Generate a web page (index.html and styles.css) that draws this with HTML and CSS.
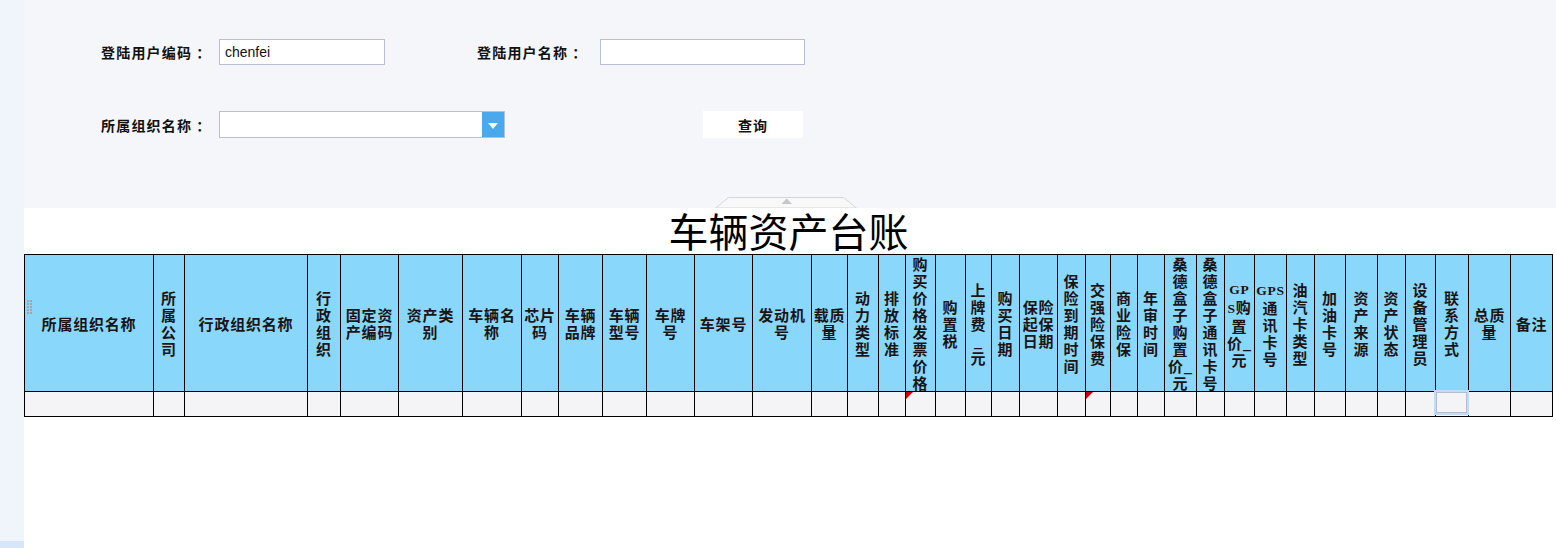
FILE: index.html
```html
<!DOCTYPE html>
<html lang="zh-CN">
<head>
<meta charset="utf-8">
<title>车辆资产台账</title>
<link rel="stylesheet" href="styles.css">
</head>
<body>
<div class="page">
  <aside class="side">
    <div class="side-fill"></div>
    <div class="side-foot"></div>
  </aside>
  <main class="main">
    <section class="query">
      <div class="qrow qrow-1">
        <label class="lbl">登陆用户编码<span class="colon">：</span></label>
        <input class="inp inp-code" type="text" value="chenfei">
        <label class="lbl lbl-name">登陆用户名称<span class="colon">：</span></label>
        <input class="inp inp-name" type="text" value="">
      </div>
      <div class="qrow qrow-2">
        <label class="lbl">所属组织名称<span class="colon">：</span></label>
        <div class="combo">
          <div class="combo-text"></div>
          <div class="combo-btn">
            <svg width="10" height="6" viewBox="0 0 10 6"><polygon points="0,0 10,0 5,6" fill="#ffffff"/></svg>
          </div>
        </div>
        <button class="btn" type="button">查询</button>
      </div>
      <div class="collapse-tab">
        <svg width="142" height="11" viewBox="0 0 142 11">
          <polygon points="0.5,11 13.5,0.5 128.5,0.5 141.5,11" fill="#f8f8f9" stroke="#d6d6d8" stroke-width="1"/>
          <polygon points="66.5,7 71.7,1.5 77,7" fill="#c6c6c8"/>
        </svg>
      </div>
    </section>
    <section class="report">
      <h1 class="title">车辆资产台账</h1>
      <div class="sheet">
        <div class="th th-first">
          <svg class="drag" width="6" height="16" viewBox="0 0 6 16">
            <g fill="#9ba6b3">
              <rect x="0" y="0" width="2" height="2"/><rect x="3" y="0" width="2" height="2"/>
              <rect x="0" y="3" width="2" height="2"/><rect x="3" y="3" width="2" height="2"/>
              <rect x="0" y="6" width="2" height="2"/><rect x="3" y="6" width="2" height="2"/>
              <rect x="0" y="9" width="2" height="2"/><rect x="3" y="9" width="2" height="2"/>
              <rect x="0" y="12" width="2" height="2"/><rect x="3" y="12" width="2" height="2"/>
            </g>
          </svg>
          <span>所属组织名称</span>
        </div>
        <div class="th"><span>所属公司</span></div>
        <div class="th"><span>行政组织名称</span></div>
        <div class="th"><span>行政组织</span></div>
        <div class="th"><span>固定资产编码</span></div>
        <div class="th"><span>资产类别</span></div>
        <div class="th"><span>车辆名称</span></div>
        <div class="th"><span>芯片码</span></div>
        <div class="th"><span>车辆品牌</span></div>
        <div class="th"><span>车辆型号</span></div>
        <div class="th"><span>车牌号</span></div>
        <div class="th"><span>车架号</span></div>
        <div class="th"><span>发动机号</span></div>
        <div class="th"><span>载质量</span></div>
        <div class="th"><span>动力类型</span></div>
        <div class="th"><span>排放标准</span></div>
        <div class="th"><span>购买价格发票价格</span></div>
        <div class="th"><span>购置税</span></div>
        <div class="th"><span>上牌费_元</span></div>
        <div class="th"><span>购买日期</span></div>
        <div class="th"><span>保险起保日期</span></div>
        <div class="th"><span>保险到期时间</span></div>
        <div class="th"><span>交强险保费</span></div>
        <div class="th"><span>商业险保</span></div>
        <div class="th"><span>年审时间</span></div>
        <div class="th"><span>桑德盒子购置价_元</span></div>
        <div class="th"><span>桑德盒子通讯卡号</span></div>
        <div class="th"><span><span class="lat">GPS</span>购置价_元</span></div>
        <div class="th"><span><span class="lat">GPS</span>通讯卡号</span></div>
        <div class="th"><span>油汽卡类型</span></div>
        <div class="th"><span>加油卡号</span></div>
        <div class="th"><span>资产来源</span></div>
        <div class="th"><span>资产状态</span></div>
        <div class="th"><span>设备管理员</span></div>
        <div class="th"><span>联系方式</span></div>
        <div class="th"><span>总质量</span></div>
        <div class="th"><span>备注</span></div>

        <div class="td"></div>
        <div class="td"></div>
        <div class="td"></div>
        <div class="td"></div>
        <div class="td"></div>
        <div class="td"></div>
        <div class="td"></div>
        <div class="td"></div>
        <div class="td"></div>
        <div class="td"></div>
        <div class="td"></div>
        <div class="td"></div>
        <div class="td"></div>
        <div class="td"></div>
        <div class="td"></div>
        <div class="td"></div>
        <div class="td td-note"></div>
        <div class="td"></div>
        <div class="td"></div>
        <div class="td"></div>
        <div class="td"></div>
        <div class="td"></div>
        <div class="td td-note"></div>
        <div class="td"></div>
        <div class="td"></div>
        <div class="td"></div>
        <div class="td"></div>
        <div class="td"></div>
        <div class="td"></div>
        <div class="td"></div>
        <div class="td"></div>
        <div class="td"></div>
        <div class="td"></div>
        <div class="td"></div>
        <div class="td td-active"><div class="focus"></div></div>
        <div class="td"></div>
        <div class="td"></div>
      </div>
    </section>
  </main>
</div>
</body>
</html>
```

FILE: styles.css
```css
html, body {
  margin: 0;
  padding: 0;
  background: #ffffff;
}

body {
  font-family: "Noto Sans CJK SC", "Noto Sans", sans-serif;
  color: #141414;
}

.page {
  display: flex;
  width: 1556px;
  height: 548px;
  overflow: hidden;
}

.side {
  width: 24px;
  flex: 0 0 24px;
  display: flex;
  flex-direction: column;
}

.side-fill {
  flex: 1 1 auto;
  background: #f0f5fc;
}

.side-foot {
  height: 7px;
  background: #d5e5fa;
}

.main {
  flex: 1 1 auto;
  display: flex;
  flex-direction: column;
  background: #ffffff;
}

/* ---------- query panel ---------- */
.query {
  position: relative;
  height: 208px;
  box-sizing: border-box;
  background: #f5f6f9;
  padding: 39px 0 0 77px;
}

.qrow {
  display: flex;
  align-items: center;
}

.qrow-2 {
  margin-top: 46px;
}

.lbl {
  width: 118px;
  flex: 0 0 118px;
  font-size: 14px;
  font-weight: bold;
  letter-spacing: 1.2px;
  line-height: 26px;
  color: #111111;
  white-space: nowrap;
}

.colon {
  margin-left: 4px;
}

.lbl-name {
  width: 123px;
  flex: 0 0 123px;
  margin-left: 92px;
}

.inp {
  box-sizing: border-box;
  height: 26px;
  margin: 0;
  padding: 0 0 0 5px;
  border: 1px solid #b8bdd1;
  background: #ffffff;
  font-family: "Liberation Sans", Arial, sans-serif;
  font-size: 14px;
  color: #111111;
  outline: none;
}

.inp-code {
  width: 166px;
}

.inp-name {
  width: 205px;
}

.combo {
  box-sizing: border-box;
  width: 286px;
  height: 27px;
  display: flex;
  border: 1px solid #b8bdd1;
  background: #ffffff;
}

.combo-text {
  flex: 1 1 auto;
}

.combo-btn {
  width: 22px;
  flex: 0 0 22px;
  background: #4aa9eb;
  display: flex;
  align-items: center;
  justify-content: center;
}

.combo-btn svg {
  margin-top: 3px;
}

.btn {
  margin-left: 198px;
  width: 100px;
  height: 27px;
  padding: 0;
  border: none;
  background: #ffffff;
  font-family: "Noto Sans CJK SC", sans-serif;
  font-size: 14px;
  font-weight: bold;
  letter-spacing: 1px;
  color: #111111;
}

.collapse-tab {
  position: absolute;
  left: 691px;
  bottom: 0;
  height: 11px;
  line-height: 0;
}

/* ---------- report ---------- */
.report {
  flex: 1 1 auto;
  background: #ffffff;
}

.title {
  width: 1529px;
  margin: 0;
  height: 46px;
  font-size: 40px;
  line-height: 44px;
  font-weight: normal;
  text-align: center;
  color: #000000;
  letter-spacing: 0;
}

.sheet {
  width: 1529px;
  box-sizing: border-box;
  display: grid;
  grid-template-columns:
    128px 30px 122px 32px 57px 63px 58px 36px 43px 43px
    47px 57px 58px 35px 30px 26px 29px 29px 25px 27px
    37px 27px 24px 26px 26px 31px 27px 29px 31px 27px
    30px 31px 27px 29px 32px 41px 41px;
  grid-template-rows: 136px 24px;
  gap: 1px;
  padding: 1px;
  background: #000000;
}

.th {
  position: relative;
  display: flex;
  align-items: center;
  justify-content: center;
  overflow: hidden;
  padding: 0 1px;
  background: #89d8fb;
  font-size: 15px;
  font-weight: bold;
  line-height: 17px;
  letter-spacing: 0.8px;
  text-align: center;
  word-break: break-all;
  color: #1c1414;
}

.th > span {
  display: block;
}

.lat {
  font-family: "Liberation Serif", serif;
  font-size: 13.5px;
  font-weight: bold;
}

.drag {
  position: absolute;
  left: 2px;
  top: 45px;
}

.td {
  position: relative;
  background: #f4f4f6;
}

.td-note::before {
  content: "";
  position: absolute;
  left: 0;
  top: 0;
  border-top: 7px solid #cf0000;
  border-right: 7px solid transparent;
}

.focus {
  position: absolute;
  left: -2px;
  top: -2px;
  width: 35px;
  height: 25px;
  box-sizing: border-box;
  border: 2px solid #c4dcf2;
  box-shadow: inset 0 0 0 1px #b4bccf;
}
```
